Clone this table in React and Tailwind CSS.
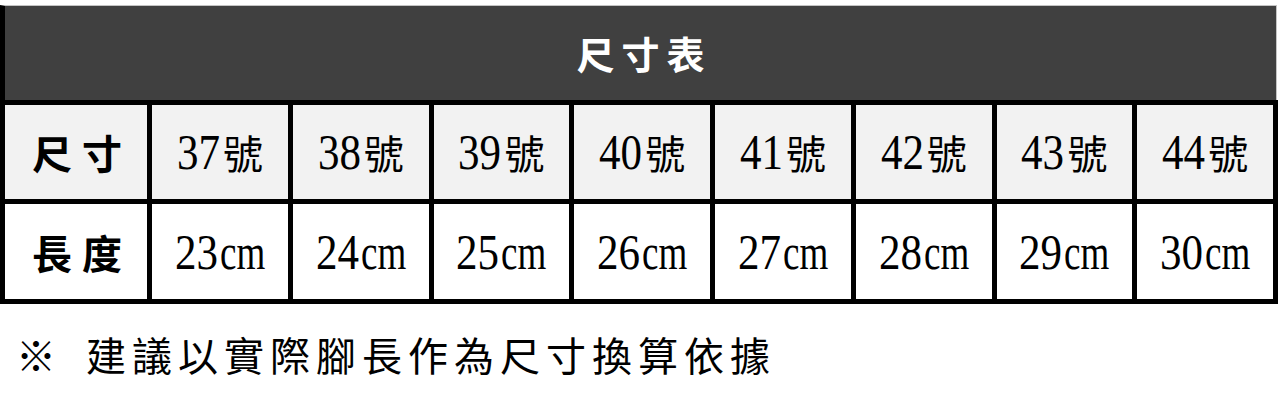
import React from "react";

const sizes = ["37", "38", "39", "40", "41", "42", "43", "44"];
const lengths = ["23", "24", "25", "26", "27", "28", "29", "30"];

export default function App() {
  return (
    <div className="w-[1280px] h-[406px] bg-white pt-[5px] overflow-hidden text-black font-['Noto_Sans_CJK_TC','Noto_Sans',sans-serif]">
      {/* Title bar */}
      <div className="h-[95px] w-[1277px] bg-[#404040] border-l-[5px] border-l-black border-t border-t-[#c4c4c4] border-r border-r-[#c4c4c4] flex items-center justify-center">
        <h1 className="text-white font-bold text-[38px] tracking-[7px] pl-[7px] leading-none">
          尺寸表
        </h1>
      </div>

      {/* Table */}
      <div className="w-[1278px] bg-black p-[5px] grid grid-cols-[142px_repeat(8,1fr)] gap-[5px]">
        <div className="h-[94px] bg-[#f2f2f2] flex items-center justify-center font-bold text-[40px] tracking-[10px] pl-[12px]">
          尺寸
        </div>
        {sizes.map((s) => (
          <div key={s} className="h-[94px] bg-[#f2f2f2] flex items-center justify-center">
            <span className="inline-block font-['Liberation_Serif',serif] text-[50px] leading-none scale-x-[0.86] origin-left -mr-[7px]">{s}</span>
            <span className="text-[40px] leading-none ml-[3px]">號</span>
          </div>
        ))}

        <div className="h-[95px] bg-white flex items-center justify-center font-bold text-[40px] tracking-[10px] pl-[12px]">
          長度
        </div>
        {lengths.map((l) => (
          <div key={l} className="h-[95px] bg-white flex items-center justify-center">
            <span className="inline-block font-['Liberation_Serif',serif] text-[50px] leading-none scale-x-[0.86] origin-left -mr-[7px]">{l}</span>
            <span className="inline-block font-['Liberation_Serif',serif] text-[50px] leading-none scale-x-[0.74] origin-left -mr-[16px] ml-[2px]">cm</span>
          </div>
        ))}
      </div>

      {/* Note */}
      <div className="h-[100px] flex items-center pl-[16px]">
        <p className="text-[40px] tracking-[6px] leading-none">
          <span className="mr-[24px]">※</span>建議以實際腳長作為尺寸換算依據
        </p>
      </div>
    </div>
  );
}
